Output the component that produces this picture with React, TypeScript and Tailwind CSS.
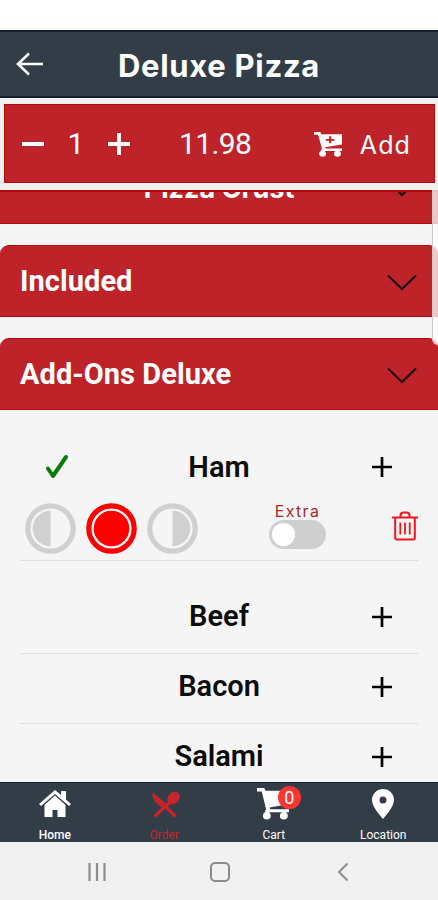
import React, { useState } from 'react';

const TOPPINGS = ['Beef', 'Bacon', 'Salami'];

const CartIcon = ({ className, plus }: { className: string; plus?: boolean }) => (
  <svg viewBox="0 0 31 32" preserveAspectRatio="none" className={className} fill="currentColor">
    <path d="M0 0h7l1.200 2.800H31v13.200L12.200 19.500l.6 1.700H31v3H9.500L4.600 3.400H0z" />
    <circle cx="9.5" cy="27.8" r="3.800" />
    <circle cx="26" cy="27.8" r="3.800" />
    <path d="M8 22h4v4H8zM24.500 22h3.500v4h-3.500z" />
    {plus && <path d="M16.700 5.500h2.400v3.300h3.600v2.400h-3.600v3.300h-2.400v-3.300h-3.600V8.800h3.600z" fill="#bf232a" />}
  </svg>
);

const Chevron = () => (
  <svg viewBox="0 0 30 17" className="w-[30px] h-[17px]" fill="none" stroke="#1c0506" strokeWidth="2.100">
    <path d="M1 1.500l14 13.500L29 1.500" />
  </svg>
);

const PlusIcon = () => (
  <svg viewBox="0 0 20 20" className="w-5 h-5" fill="none" stroke="#000" strokeWidth="2.700">
    <path d="M0 10h20M10 0v20" />
  </svg>
);

const TrashIcon = () => (
  <svg viewBox="0 0 26 30" className="w-[26px] h-[30px]" fill="none" stroke="#f0141c" strokeWidth="2">
    <path d="M0 6.500h26M8.500 6V4.500A3 3 0 0 1 11.500 1.500h3a3 3 0 0 1 3 3V6M3.200 7v20a1.500 1.500 0 0 0 1.500 1.500h16.600a1.500 1.500 0 0 0 1.500-1.500V7" />
    <path d="M8.300 11.500v12M13 11.500v12M17.700 11.500v12" strokeWidth="1.800" />
  </svg>
);

type Portion = 'left' | 'whole' | 'right';

const PortionButton = ({ portion, active, onClick }: { portion: Portion; active: boolean; onClick: () => void }) => {
  const color = active ? '#ff0000' : '#d0d0d0';
  return (
    <button onClick={onClick} className="w-[51px] h-[51px]">
      <svg viewBox="0 0 51 51" className="w-full h-full">
        <circle cx="25.5" cy="25.5" r="22.700" fill="#f5f5f5" stroke={color} strokeWidth="5.200" />
        {portion === 'whole' && <circle cx="25.5" cy="25.5" r="17.800" fill={color} />}
        {portion === 'left' && <path d="M25.500 7.700a17.800 17.800 0 0 0 0 35.600z" fill={color} />}
        {portion === 'right' && <path d="M25.500 7.700a17.800 17.800 0 0 1 0 35.600z" fill={color} />}
      </svg>
    </button>
  );
};

const SectionHeader = ({ title }: { title: string }) => (
  <div className="h-[72px] shrink-0 bg-[#bf232a] border-y border-[#b5070e] rounded-tl-[9px] rounded-tr-[9px] flex items-center justify-between pl-5 pr-[21px]">
    <span className="text-[29px] leading-none font-bold text-white tracking-[0.05px]">{title}</span>
    <span className="pt-0.5"><Chevron /></span>
  </div>
);

const ToppingRow = ({ name }: { name: string }) => (
  <div className="h-[70px] shrink-0 border-b border-[#dedede] pb-1 flex items-center justify-center relative">
    <span className="text-[29px] leading-none font-semibold text-[#0c0c0c]">{name}</span>
    <button className="absolute right-[26px]"><PlusIcon /></button>
  </div>
);

export default function App() {
  const [qty, setQty] = useState(1);
  const [portion, setPortion] = useState<Portion>('whole');
  const [extra, setExtra] = useState(false);

  return (
    <div className="w-[438px] h-[900px] flex flex-col overflow-hidden bg-white font-['Roboto',sans-serif] select-none">
      <div className="h-[30px] shrink-0" />

      {/* Title bar */}
      <header className="h-[68px] shrink-0 bg-[#333d47] border-y-2 border-[#172130] relative flex items-center justify-center">
        <svg viewBox="0 0 28 24" className="absolute left-4 w-7 h-6" fill="none" stroke="#fff" strokeWidth="2.600">
          <path d="M27 12H2M13 1.500L2 12l11 10.500" />
        </svg>
        <h1 className="font-['Inter',sans-serif] text-[31px] leading-none font-bold text-white tracking-[0.7px] pt-[3px]">Deluxe Pizza</h1>
      </header>

      {/* Quantity, price and add button */}
      <div className="h-[92px] shrink-0 bg-[#f1f1f0] pt-1.5 pb-[7px] pl-1 pr-[3px]">
        <div className="h-[79px] bg-[#bf232a] border border-[#b5070e] flex items-center text-white">
          <button onClick={() => setQty(Math.max(1, qty - 1))} className="ml-[17px] w-[22px] h-1 bg-white" />
          <span className="ml-[18px] w-7 text-center text-[30px] leading-none">{qty}</span>
          <button onClick={() => setQty(qty + 1)} className="ml-[18px]">
            <svg viewBox="0 0 22 22" className="w-[22px] h-[22px]" stroke="#fff" strokeWidth="3.800">
              <path d="M0 11h22M11 0v22" />
            </svg>
          </button>
          <span className="ml-[49px] w-[75px] text-[30px] leading-none tracking-[-0.6px]">11.98</span>
          <button className="ml-auto mr-[23px] flex items-center">
            <CartIcon className="w-[28px] h-[25px] mt-0.5" plus />
            <span className="font-['Inter',sans-serif] ml-[18px] text-[25px] leading-none pt-1 tracking-[1.100px]">Add</span>
          </button>
        </div>
      </div>

      {/* Scrolling option sections */}
      <main className="h-[592px] shrink-0 bg-[#f5f5f5] relative overflow-hidden flex flex-col">
        <div className="h-[34px] shrink-0 overflow-hidden flex flex-col justify-end border-t-2 border-[#b5070e]">
          <div className="h-[72px] shrink-0 bg-[#bf232a] border-b border-[#b5070e] relative flex items-center justify-center">
            <span className="font-['Inter',sans-serif] text-[27px] leading-none font-bold text-white pt-0.5">Pizza Crust</span>
            <span className="absolute right-[21px] pt-0.5"><Chevron /></span>
          </div>
        </div>
        <div className="mt-[21px] flex flex-col gap-[21px]">
          <SectionHeader title="Included" />
          <SectionHeader title="Add-Ons Deluxe" />
        </div>

        <div className="mx-5 flex flex-col">
          <div className="h-[151px] border-b border-[#dedede]">
            <div className="pt-[22px] h-[92px] shrink-0 flex items-center justify-center relative">
              <svg viewBox="0 0 24 26" className="absolute left-[25px] w-6 h-[26px]" fill="none" stroke="#087d0b" strokeWidth="4" strokeLinecap="round" strokeLinejoin="round">
                <path d="M3 14.500l5 7.500L21 3" />
              </svg>
              <span className="text-[29px] leading-none font-semibold text-[#0c0c0c]">Ham</span>
              <button className="absolute right-[26px]"><PlusIcon /></button>
            </div>
            <div className="flex items-start pl-[5px]">
              <div className="flex gap-2.5 pt-px">
                {(['left', 'whole', 'right'] as Portion[]).map((p) => (
                  <PortionButton key={p} portion={p} active={portion === p} onClick={() => setPortion(p)} />
                ))}
              </div>
              <div className="ml-[71px] w-[57px] flex flex-col items-center">
                <span className="font-['Inter',sans-serif] text-[16px] leading-[18px] text-[#a52a2e] tracking-[1.300px]">Extra</span>
                <button onClick={() => setExtra(!extra)} className={`w-[57px] h-[29px] rounded-full bg-[#cfcfcf] p-[3px] flex ${extra ? 'justify-end' : ''}`}>
                  <span className="w-[23px] h-[23px] rounded-full bg-white" />
                </button>
              </div>
              <button className="ml-auto mt-[9px]"><TrashIcon /></button>
            </div>
          </div>
          <div className="mt-[23px]">
            {TOPPINGS.map((name) => <ToppingRow key={name} name={name} />)}
          </div>
        </div>

        {/* Scrollbar thumb */}
        <div className="absolute top-0 right-0 w-[6px] h-[155px] rounded-bl-md bg-white/75 border-l border-[#cccccc]" />
      </main>

      {/* Bottom tabs */}
      <nav className="h-[60px] shrink-0 bg-[#333d47] border-t border-[#172130] grid grid-cols-4 text-white text-[12px] leading-none">
        <div className="flex flex-col items-center">
          <svg viewBox="0 0 32 27" className="mt-[7px] w-8 h-[27px]" fill="currentColor">
            <path d="M16 0l6 5V1h5v8.500l5 4.500-2 2L16 4 2 16l-2-2z" />
            <path d="M5.500 15L16 5.500l10.500 9.500v12H18.500v-7h-5v7h-8z" />
          </svg>
          <span className="mt-3 font-medium">Home</span>
        </div>
        <div className="flex flex-col items-center text-[#c9232b]">
          <svg viewBox="0 0 28 28" className="mt-2 ml-[3px] w-7 h-7" fill="currentColor">
            <path d="M.5 1.500L14.500 13l-4 3.500C4 13-.5 8 .5 1.500z" />
            <path d="M11 13l12.500 12.500" stroke="currentColor" strokeWidth="3.500" />
            <path d="M2.500 25.500L18 11" stroke="currentColor" strokeWidth="3.200" />
            <ellipse cx="21.500" cy="7" rx="5.500" ry="7" transform="rotate(48 21.500 7)" />
          </svg>
          <span className="mt-2.5">Order</span>
        </div>
        <div className="flex flex-col items-center">
          <div className="mt-[5px] mr-0.5 relative">
            <CartIcon className="w-8 h-8" />
            <span className="absolute left-[21px] top-[-2px] w-[23px] h-[23px] rounded-full bg-[#fb3530] text-[18px] leading-[23px] text-center">0</span>
          </div>
          <span className="mt-[9px]">Cart</span>
        </div>
        <div className="flex flex-col items-center">
          <svg viewBox="0 0 22 30" className="mt-[6px] w-[22px] h-[30px]" fill="currentColor" fillRule="evenodd">
            <path d="M11 0a11 11 0 0 1 11 11c0 6-6 13-11 19C6 24 0 17 0 11A11 11 0 0 1 11 0zm0 7.500a3.500 3.500 0 1 0 0 7 3.500 3.500 0 0 0 0-7z" />
          </svg>
          <span className="mt-2.5">Location</span>
        </div>
      </nav>

      {/* System navigation */}
      <div className="h-[58px] shrink-0 bg-[#f1f1f1] flex items-center pl-[88px] pt-0.5 text-[#8c8c8c]">
        <svg viewBox="0 0 18 18" className="w-[18px] h-[18px]" stroke="currentColor" strokeWidth="2.200">
          <path d="M1.500 0v18M9 0v18M16.500 0v18" />
        </svg>
        <span className="ml-[104px] w-5 h-5 border-2 border-current rounded-[5px]" />
        <svg viewBox="0 0 12 20" className="ml-[107px] w-3 h-5" fill="none" stroke="currentColor" strokeWidth="2">
          <path d="M10.500 1.500L2 10l8.500 8.500" />
        </svg>
      </div>
    </div>
  );
}
